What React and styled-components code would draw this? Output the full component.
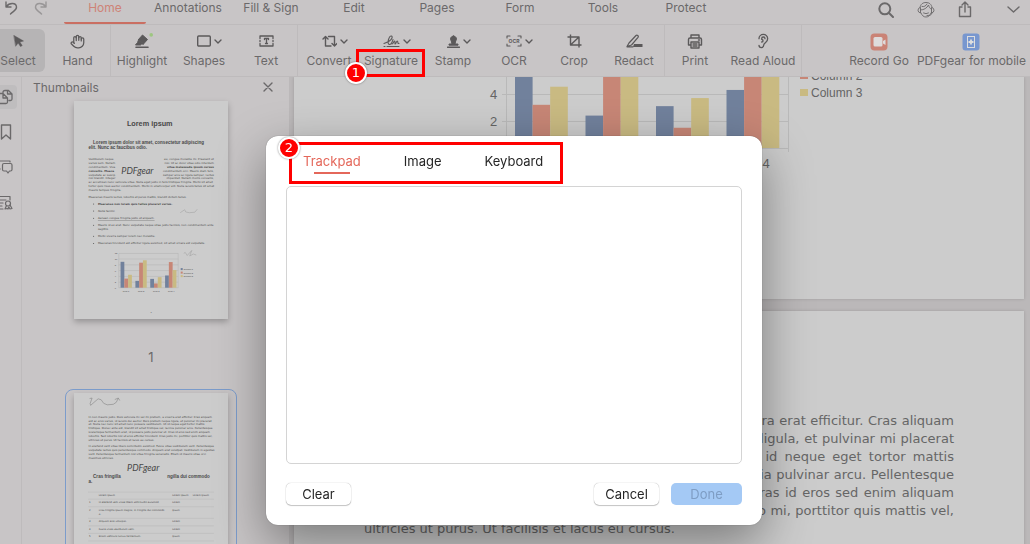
import styled, { createGlobalStyle } from "styled-components";
import { Hand, Ear } from "lucide-react";

const tabs = ["Home", "Annotations", "Fill & Sign", "Edit", "Pages", "Form", "Tools", "Protect"];

const mainText = [
    "In non mauris justo. Duis vehicula mi vel mi pretium, a viverra erat efficitur. Cras aliquam",
    "est ac eros varius, id iaculis dui auctor. Duis pretium neque ligula, et pulvinar mi placerat",
    "et. Nulla nec nunc sit amet nunc posuere vestibulum. Ut id neque eget tortor mattis",
    "tristique. Donec ante est, blandit sit amet tristique vel, lacinia pulvinar arcu. Pellentesque",
    "scelerisque fermentum erat, id posuere justo pulvinar ut. Cras id eros sed enim aliquam",
    "lobortis. Sed lobortis nisl ut eros efficitur tincidunt. Cras justo mi, porttitor quis mattis vel,",
    "ultricies ut purus. Ut facilisis et lacus eu cursus.",
];

const secondText = [
    "In eleifend velit vitae libero sollicitudin euismod. Fusce vitae vestibulum velit. Pellentesque",
    "vulputate lectus quis pellentesque commodo. Aliquam erat volutpat. Vestibulum in egestas",
    "velit. Pellentesque fermentum nisl vitae fringilla venenatis. Etiam id mauris vitae orci",
    "maximus ultricies.",
];

// the first lines wrap round the signature
const wrappedText = [
    { left: "Vestibulum neque", right: "eu, congue molestie mi. Praesent ut" },
    { left: "varius sem. Nullam", right: "nisi. Ut ac dolor vitae odio interdum" },
    { left: "condimentum. Viva", right: "vitae malesuada ipsum cursus", rightBold: true },
    { left: "convallis. Maece", right: "condimentum orci. Mauris diam felis,", leftBold: true },
    { left: "vulputate ac suscip", right: "semper arcu ac ligula semper, luctus" },
    { left: "nisl blandit. Integer", right: "imperdiet. Nullam mollis convallis," },
];

const introText = [
    "ac accumsan nunc vehicula vitae. Nulla eget justo in felis tristique fringilla. Morbi sit amet",
    "tortor quis risus auctor condimentum. Morbi in ullamcorper elit. Nulla iaculis tellus sit amet",
    "mauris tempus fringilla.",
];

const bullets = [
    { y: 413, text: "Maecenas non lorem quis tellus placerat varius.", weight: 700 },
    { y: 441, text: "Nulla facilisi.", italic: true },
    { y: 470, text: "Aenean congue fringilla justo ut aliquam.", underline: true },
    { y: 498, text: "Mauris id ex erat. Nunc vulputate neque vitae justo facilisis, non condimentum ante" },
    { y: 542, text: "Morbi viverra semper lorem nec molestie." },
    { y: 570, text: "Maecenas tincidunt est efficitur ligula euismod, sit amet ornare est vulputate." },
];

const tableRows = [
    { y: 408, no: "", text: "Lorem ipsum", a: "Lorem ipsum", b: "Lorem ipsum" },
    { y: 438, no: "1", text: "In eleifend velit vitae libero sollicitudin euismod.", a: "Lorem" },
    { y: 467, no: "2", text: "Cras fringilla ipsum magna, in fringilla dui commodo", a: "Ipsum" },
    { y: 513, no: "3", text: "Aliquam erat volutpat.", a: "Lorem" },
    { y: 543, no: "4", text: "Fusce vitae vestibulum velit.", a: "Lorem" },
    { y: 573, no: "5", text: "Etiam vehicula luctus fermentum.", a: "Ipsum" },
];

const rows = [
    [9.1, 3.2, 4.54],
    [2.4, 8.8, 9.65],
    [3.1, 1.5, 3.7],
    [4.3, 9.02, 6.2],
];
const barColors = ["#71819c", "#c78676", "#c9ba82"];

export default function App() {
    return (
        <>
            <GlobalStyle />
            <Container>
                <Header>
                    <History>
                        <IconButton aria-label="Undo"><UndoIcon /></IconButton>
                        <IconButton aria-label="Redo" $faded><RedoIcon /></IconButton>
                    </History>
                    <Tabs>
                        {tabs.map((t, i) => (
                            <Tab key={t} $active={i === 0}>{t}</Tab>
                        ))}
                    </Tabs>
                    <Actions>
                        <IconButton aria-label="Search"><SearchIcon /></IconButton>
                        <IconButton aria-label="Support"><SupportIcon /></IconButton>
                        <IconButton aria-label="Share"><ShareIcon /></IconButton>
                        <IconButton aria-label="Collapse" $apart><ChevronIcon w={13} h={7} /></IconButton>
                    </Actions>
                </Header>

                <Toolbar>
                    <Group>
                        <Tool $first $selected><Glyph><SelectIcon /></Glyph>Select</Tool>
                        <Tool $wide><Glyph><Hand size={15} strokeWidth={2} /></Glyph>Hand</Tool>
                    </Group>
                    <Group>
                        <Tool><Glyph><HighlightIcon /></Glyph>Highlight</Tool>
                        <Tool><Glyph $menu><ShapesIcon /><ChevronIcon /></Glyph>Shapes</Tool>
                        <Tool><Glyph><TextIcon /></Glyph>Text</Tool>
                    </Group>
                    <Group>
                        <Tool><Glyph $menu><ConvertIcon /><ChevronIcon /></Glyph>Convert</Tool>
                        <Tool>
                            <Glyph $menu><SignatureIcon /><ChevronIcon /></Glyph>Signature
                            <ToolMark><Badge $low>1</Badge></ToolMark>
                        </Tool>
                        <Tool><Glyph $menu><StampIcon /><ChevronIcon /></Glyph>Stamp</Tool>
                        <Tool $narrow><Glyph $menu><OcrIcon /><ChevronIcon /></Glyph>OCR</Tool>
                        <Tool $narrow><Glyph><CropIcon /></Glyph>Crop</Tool>
                        <Tool $narrow><Glyph><RedactIcon /></Glyph>Redact</Tool>
                    </Group>
                    <Group>
                        <Tool $narrow><Glyph><PrintIcon /></Glyph>Print</Tool>
                        <Tool $large><Glyph><Ear size={16} strokeWidth={2} /></Glyph>Read Aloud</Tool>
                    </Group>
                    <Promo>
                        <PromoButton><RecordIcon />Record Go</PromoButton>
                        <PromoButton><MobileIcon />PDFgear for mobile</PromoButton>
                    </Promo>
                </Toolbar>

                <Main>
                    <Rail>
                        <RailButton aria-label="Thumbnails" $active><PagesIcon /></RailButton>
                        <RailButton aria-label="Bookmarks"><BookmarkIcon /></RailButton>
                        <RailButton aria-label="Comments"><CommentsIcon /></RailButton>
                        <RailButton aria-label="Certificates"><CertificateIcon /></RailButton>
                    </Rail>
                    <Panel>
                        <PanelTitle>
                            <h2>Thumbnails</h2>
                            <IconButton aria-label="Close"><CloseIcon /></IconButton>
                        </PanelTitle>
                        <Thumb><FirstPage /></Thumb>
                        <PageNumber>1</PageNumber>
                        <Thumb $selected><SecondPage /></Thumb>
                    </Panel>
                    <Document>
                        <Page>
                            <Chart />
                        </Page>
                        <Page $text>
                            {mainText.map((line, i) => (
                                <Line key={line} $last={i === mainText.length - 1}>{line}</Line>
                            ))}
                        </Page>
                    </Document>
                </Main>
            </Container>

            <Overlay>
                <Dialog role="dialog" aria-label="Signature">
                    <DialogTabs role="tablist">
                        <DialogTab role="tab" aria-selected="true" $active>Trackpad</DialogTab>
                        <DialogTab role="tab" aria-selected="false">Image</DialogTab>
                        <DialogTab role="tab" aria-selected="false">Keyboard</DialogTab>
                        <TabsMark><Badge>2</Badge></TabsMark>
                    </DialogTabs>
                    <Pad />
                    <Buttons>
                        <Button>Clear</Button>
                        <Spacer />
                        <Button>Cancel</Button>
                        <Button $primary disabled>Done</Button>
                    </Buttons>
                </Dialog>
            </Overlay>
        </>
    );
}

function Chart() {
    return (
        <svg width="410" height="110" viewBox="454 77 410 110" fontFamily="Liberation Sans, Arial, sans-serif" fontSize="13" fill="#646464">
            <path d="M502 94.500H788M502 121.500H788M502 148.500H788M506.500 77V152M788.500 77V152" stroke="#b9b9b9" />
            {rows.map((row, r) =>
                row.map((v, c) => (
                    <rect key={`${r}${c}`} x={515 + r * 70.5 + c * 17.6} y={148 - v * 13.5} width="17.600" height={v * 13.5} fill={barColors[c]} />
                ))
            )}
            <text x="490" y="99">4</text>
            <text x="490" y="126">2</text>
            <text x="733" y="168">Row 4</text>
            <rect x="800" y="72" width="8" height="7" fill="#c78676" />
            <rect x="800" y="89" width="8" height="7" fill="#c9ba82" />
            <text x="811" y="80" fontSize="12">Column 2</text>
            <text x="811" y="97" fontSize="12">Column 3</text>
        </svg>
    );
}

function FirstPage() {
    return (
        <Mini viewBox="0 0 612 868">
            <text x="301" y="100" fontSize="29" fontWeight="700" textAnchor="middle">Lorem ipsum</text>
            <text x="76" y="169" fontSize="18" fontWeight="700">Lorem ipsum dolor sit amet, consectetur adipiscing</text>
            <text x="58" y="190" fontSize="18" fontWeight="700">elit. Nunc ac faucibus odio.</text>
            <g fontFamily="DejaVu Sans" fontSize="11">
                {wrappedText.map((t, i) => (
                    <g key={t.left}>
                        <text x="58" y={235 + i * 15.3} fontWeight={t.leftBold ? 700 : 400}>{t.left}</text>
                        <text x="556" y={235 + i * 15.3} textAnchor="end" fontWeight={t.rightBold ? 700 : 400}>{t.right}</text>
                    </g>
                ))}
                {introText.map((t, i) => <text key={t} x="58" y={327 + i * 15.3}>{t}</text>)}
                <text x="58" y="384">Maecenas mauris lectus, lobortis et purus mattis, blandit dictum tellus.</text>
                {bullets.map((b) => (
                    <g key={b.y}>
                        <circle cx="78" cy={b.y - 4} r="2" />
                        <text x="95" y={b.y} fontWeight={b.weight} fontStyle={b.italic ? "italic" : "normal"} textDecoration={b.underline ? "underline" : "none"}>{b.text}</text>
                    </g>
                ))}
                <text x="95" y="514">sagittis.</text>
            </g>
            <text x="188" y="290" fontFamily="Lato" fontStyle="italic" fontSize="36">PDFgear</text>
            <path d="M422 444l18-12 4 9 14 3 22-2 10-12M436 606l6-4 8 12 18-20-8 22 14-8 12 4" fill="none" stroke="#9c9c9c" strokeWidth="2" />
            <path d="M178 606H414V742H178zM178 628H414M178 651H414M178 674H414M178 697H414M178 720H414" stroke="#b2b2b2" strokeWidth="2" fill="none" />
            {rows.map((row, r) =>
                row.map((v, c) => (
                    <rect key={`${r}${c}`} x={185 + r * 59 + c * 15} y={742 - v * 11.3} width="15" height={v * 11.3} fill={barColors[c]} />
                ))
            )}
            <g fontSize="9">
                {["12", "10", "8", "6", "4", "2", "0"].map((n, i) => <text key={n} x="162" y={610 + i * 22.6}>{n}</text>)}
                {[1, 2, 3, 4].map((n) => <text key={n} x={134 + n * 60} y="760">Row {n}</text>)}
                {[1, 2, 3].map((n) => (
                    <g key={n}>
                        <rect x="424" y={650 + n * 14} width="8" height="8" fill={barColors[n - 1]} />
                        <text x="435" y={658 + n * 14}>Column {n}</text>
                    </g>
                ))}
                <text x="304" y="842">1</text>
            </g>
        </Mini>
    );
}

function SecondPage() {
    return (
        <Mini viewBox="0 0 612 868">
            <path d="M62 22l10-2-8 22 2 7 30-26 12 4 10 14 14 6 24-2 12-8 8-16M162 26l14-6 6 10" fill="none" stroke="#777777" strokeWidth="2" />
            <g fontFamily="DejaVu Sans" fontSize="11">
                {mainText.map((t, i) => <text key={t} x="58" y={98 + i * 15.3}>{t}</text>)}
                {secondText.map((t, i) => <text key={t} x="58" y={215 + i * 15.3}>{t}</text>)}
            </g>
            <text x="76" y="336" fontSize="18" fontWeight="700">Cras fringilla</text>
            <text x="540" y="336" fontSize="18" fontWeight="700" textAnchor="end">ngilla dui commodo</text>
            <text x="58" y="356" fontSize="18" fontWeight="700">a.</text>
            <text x="211" y="311" fontFamily="Lato" fontStyle="italic" fontSize="36">PDFgear</text>
            <g fontFamily="DejaVu Sans" fontSize="10">
                {tableRows.map((r) => (
                    <g key={r.y}>
                        <text x="60" y={r.y}>{r.no}</text>
                        <text x="98" y={r.y}>{r.text}</text>
                        <text x="390" y={r.y}>{r.a}</text>
                        <text x="472" y={r.y}>{r.b}</text>
                    </g>
                ))}
                <text x="98" y="483">a.</text>
            </g>
            <path d="M56 394H556M56 422H556M56 452H556M56 498H556M56 528H556M56 558H556M56 588H556" stroke="#b6b6b6" strokeWidth="2" />
        </Mini>
    );
}

const Svg = ({ w, h, children, sw = 1.4 }) => (
    <svg width={w} height={h} viewBox={`0 0 ${w} ${h}`} fill="none" stroke="currentColor" strokeWidth={sw} strokeLinecap="round" strokeLinejoin="round">
        {children}
    </svg>
);

const UndoIcon = () => <Svg w={14} h={14}><path d="M2 1v5h5M2.500 5.500C5 2 12 1 12.500 6c.3 3-3 4-6 7" /></Svg>;
const RedoIcon = () => <Svg w={14} h={14}><path d="M12 1v5H7M11.500 5.500C9 2 2 1 1.500 6c-.3 3 3 4 6 7" /></Svg>;
const SearchIcon = () => <Svg w={16} h={16} sw={2}><circle cx="6.800" cy="6.800" r="5.500" /><path d="M11 11l4 4" /></Svg>;
const SupportIcon = () => (
    <Svg w={18} h={18} sw={0.9}>
        <path d="M3 6.500C3.500 3 6 1.500 9 1.500s5.500 1.500 6 5M4 12c1 2.500 2.500 4 5 4s4-1.500 5-4" />
        <path d="M3 6.500Q1 7 1 9.200T3.500 12V7zM15 6.500q2 .500 2 2.700T14.500 12V7zM3.500 9C7 9 10 7 11.500 4c.5 2 1.500 3.500 3 4.500M5 5.500C7 6 9 5 10 3M15 12c0 2-2 2.500-5 2.500M6.500 12q2.500 1.500 5 0" />
    </Svg>
);
const ShareIcon = () => <Svg w={14} h={17}><path d="M4 6H1.500v9.500h11V6H10M7 11V1M4 4l3-3 3 3" /></Svg>;
const ChevronIcon = ({ w = 8, h = 5 }) => <Svg w={w} h={h}><path d={`M1 1L${w / 2} ${h - 1}L${w - 1} 1`} /></Svg>;
const CloseIcon = () => <Svg w={10} h={10}><path d="M1 1l8 8M9 1L1 9" /></Svg>;

const SelectIcon = () => <Svg w={11} h={12} sw={0.5}><path d="M1 0.500L10.500 6 6.800 7l2.400 3.600-1.700 1L5.200 8 2.800 11z" fill="currentColor" /></Svg>;
const HighlightIcon = () => (
    <Svg w={22} h={16} sw={1}>
        <path d="M7.500 6.500L11.500 2l5 4.500-4 4.500z" fill="currentColor" />
        <path d="M7.500 7l-1 2.500L4.500 12h5l1.200-1 1.500 0z" fill="currentColor" />
        <path d="M5 14.300h12" strokeWidth="1.600" />
        <circle cx="20.200" cy="1.900" r="1.800" fill="#9dc680" stroke="none" />
    </Svg>
);
const ShapesIcon = () => <Svg w={14} h={12}><rect x="0.700" y="1" width="12.600" height="10" rx="1" /></Svg>;
const TextIcon = () => (
    <Svg w={15} h={12} sw={1.3}>
        <path d="M1 3.500V1h13v2.500M1 8.500V11h13V8.500M1 5.500v1M14 5.500v1" />
        <path d="M5.500 4.500v-1h4v1M7.500 3.500v5M6.500 8.500h2" />
    </Svg>
);
const ConvertIcon = () => <Svg w={15} h={13}><path d="M1 4l2.500-2.500L6 4M3.500 2v9H9M6.500 1.500h6v9M10 8.500l2.500 2.500L15 8.500" /></Svg>;
const SignatureIcon = () => (
    <Svg w={17} h={13} sw={1.1}>
        <path d="M1 8.500c3-1 7-3 8-5.500C9.800 1 7.500 0 6.300 2.500 5 5 4.500 9.500 6.500 9.500S9.500 6 10 4.500M9 9c1.500 0 1.500-3 2.500-3s0 3 .8 3 1-3 2-3-.2 2.800 1.700 2.500" />
        <path d="M1 11.500h1M4 11.500h12" />
    </Svg>
);
const StampIcon = () => (
    <Svg w={13} h={13} sw={1}>
        <path d="M6.500 1a3 3 0 0 0-2.200 5L5 9H2v1.200h9V9H8l.7-3A3 3 0 0 0 6.500 1z" fill="currentColor" />
        <path d="M.5 12.300h12" strokeWidth="1.400" />
    </Svg>
);
const OcrIcon = () => (
    <Svg w={16} h={12} sw={1.1}>
        <path d="M1 3V1h3M12 1h3v2M1 9v2h3M12 11h3V9" />
        <text x="8" y="8" textAnchor="middle" fontSize="5" fontWeight="700" fontFamily="Inter" fill="currentColor" stroke="none">OCR</text>
    </Svg>
);
const CropIcon = () => <Svg w={15} h={14}><path d="M3.500 0.500V11h11M.5 3h11.500v10.500M4 10.500l7.500-7" strokeLinecap="butt" /></Svg>;
const RedactIcon = () => (
    <Svg w={17} h={14} sw={1.2}>
        <path d="M3 9l7-7.500c1-1 3 .500 2 1.800L5.500 11 1 12.500zM1 12.800h6" />
        <path d="M8 10h8.500v3H7z" fill="currentColor" stroke="none" />
    </Svg>
);
const PrintIcon = () => (
    <Svg w={16} h={15}>
        <path d="M4 4V1h8v3M4 11H1.500V5.500Q1.500 4 3 4h10q1.500 0 1.500 1.500V11H12M4 8h8v6H4zM6 10h4M6 12h4M11.500 6h1" />
    </Svg>
);
const RecordIcon = () => (
    <svg width="18" height="18" viewBox="0 0 18 18">
        <rect x="0.500" y="0.500" width="17" height="17" rx="4" fill="#ca8376" />
        <rect x="3.500" y="4" width="9" height="9.500" rx="1.500" fill="#dedbdb" />
        <path d="M13 8l2.500-1.500v5.500L13 10.500z" fill="#dedbdb" />
    </svg>
);
const MobileIcon = () => (
    <svg width="18" height="18" viewBox="0 0 18 18" fill="none" stroke="#dedede">
        <rect x="0.500" y="0.500" width="17" height="17" rx="3" fill="#7897cf" stroke="none" />
        <rect x="5.500" y="3.500" width="7" height="11" />
        <path d="M9 6.500v5M6.500 9h5" strokeWidth="1.800" />
    </svg>
);
const PagesIcon = () => <Svg w={15} h={16} sw={1.3}><path d="M5 3.500Q5 1.500 7 1.500h3.500L14 5v5q0 1.500-1.500 1.500H11M9.500 1.500V5H14M1 4.500h4L9.500 9v4q0 1.500-1.500 1.500H1M5 4.500V9h4.500" /></Svg>;
const BookmarkIcon = () => <Svg w={15} h={16}><path d="M3.500 1h9v14L8 11l-4.500 4z" /></Svg>;
const CommentsIcon = () => (
    <Svg w={15} h={14} sw={1.2}>
        <path d="M12 2V1H1M2 9L1 10M6 3.500h6.500q1.500 0 1.500 1.500v4.500q0 1.500-1.500 1.500h-1l-1.500 2-1.500-2H6Q4.500 11 4.500 9.500V5Q4.500 3.500 6 3.500z" />
    </Svg>
);
const CertificateIcon = () => (
    <Svg w={15} h={15} sw={1.2}>
        <path d="M1 1.500h11V5M1 5h7M1 8h4M1 11h3M1 14h4" />
        <circle cx="10" cy="8.500" r="2.500" />
        <path d="M8.500 10.500L7 14l2-.5 1 .500.800-2 1.200 2 2-.5-2-3.500" />
    </Svg>
);

const GlobalStyle = createGlobalStyle`
    * {
        box-sizing: border-box;
    }
    body {
        margin: 0;
        overflow: hidden;
        background: #c8c5c6;
        color: #6b696a;
        font-family: Inter, "Noto Sans", sans-serif;
        font-size: 12px;
    }
    button {
        margin: 0;
        padding: 0;
        border: none;
        background: none;
        color: inherit;
        font: inherit;
    }
    svg {
        display: block;
        flex-shrink: 0;
    }
`;

const Container = styled.div`
    height: 100vh;
    display: flex;
    flex-direction: column;
`;

const Header = styled.header`
    height: 25px;
    display: flex;
    border-bottom: 1px solid #bebbbc;
`;

const History = styled.div`
    width: 64px;
    display: flex;
    gap: 16px;
    padding: 1px 0 0 4px;
    align-items: flex-start;
`;

const IconButton = styled.button`
    display: flex;
    margin-left: ${(p) => (p.$apart ? "12px" : "0")};
    opacity: ${(p) => (p.$faded ? 0.5 : 1)};
`;

const Tabs = styled.nav`
    display: flex;
    gap: 1px;
`;

const Tab = styled.button`
    width: 82px;
    display: flex;
    justify-content: center;
    line-height: 16px;
    white-space: nowrap;
    border-bottom: 2px solid ${(p) => (p.$active ? "#ca6f62" : "transparent")};
    border-radius: 2px;
    color: ${(p) => (p.$active ? "#ce8377" : "inherit")};
`;

const Actions = styled.div`
    margin-left: auto;
    display: flex;
    align-items: center;
    gap: 23px;
    padding: 0 10px 5px 0;
`;

const Toolbar = styled.div`
    height: 52px;
    display: flex;
    border-bottom: 1px solid #bebbbc;
`;

const Group = styled.div`
    display: flex;
    align-items: center;
    border-right: 1px solid #bebbbc;
`;

const Tool = styled.button`
    position: relative;
    width: ${(p) => (p.$first ? "45px" : p.$wide ? "65px" : p.$large ? "76px" : p.$narrow ? "60px" : "62px")};
    height: 43px;
    padding: ${(p) => (p.$first ? "1px 9px 0 0" : "1px 0 0")};
    display: flex;
    flex-direction: column;
    align-items: center;
    justify-content: center;
    gap: 4px;
    line-height: 16px;
    white-space: nowrap;
    border-radius: 0 6px 6px 0;
    background: ${(p) => (p.$selected ? "#b6b4b5" : "none")};
`;

const Glyph = styled.span`
    height: 16px;
    display: flex;
    align-items: center;
    gap: 3px;
    padding-left: ${(p) => (p.$menu ? "11px" : "0")};
    color: #5b595a;
`;

const Promo = styled.div`
    margin-left: auto;
    display: flex;
    align-items: center;
    gap: 8px;
    padding-right: 4px;
`;

const PromoButton = styled.button`
    display: flex;
    flex-direction: column;
    align-items: center;
    gap: 2px;
    line-height: 16px;
    white-space: nowrap;
`;

const Main = styled.main`
    flex: 1;
    min-height: 0;
    display: flex;
`;

const Rail = styled.aside`
    width: 22px;
    display: flex;
    flex-direction: column;
    gap: 11px;
    padding-top: 8px;
    border-right: 1px solid #bebbbc;
`;

const RailButton = styled.button`
    width: 17px;
    height: 24px;
    display: flex;
    align-items: center;
    justify-content: flex-end;
    padding-right: 4px;
    border-radius: 0 4px 4px 0;
    background: ${(p) => (p.$active ? "#bfbdbe" : "none")};
`;

const Panel = styled.section`
    width: 267px;
    padding: 0 43px;
    overflow: hidden;
`;

const PanelTitle = styled.div`
    display: flex;
    justify-content: space-between;
    align-items: center;
    height: 20px;
    margin: 0 -27px 0 -32px;
    h2 {
        margin: 0;
        font-size: 12px;
        font-weight: 400;
    }
`;

const Thumb = styled.div`
    width: 172px;
    padding: 3px 8px 8px;
    border: 1px solid ${(p) => (p.$selected ? "#7c9ccb" : "transparent")};
    border-radius: 8px;
`;

const Mini = styled.svg`
    width: 100%;
    background: #cccccc;
    fill: #484848;
    font-family: "Liberation Sans", Arial, sans-serif;
    box-shadow: 0 3px 6px rgba(0, 0, 0, 0.25);
`;

const PageNumber = styled.p`
    width: 172px;
    margin: 17px 0 20px;
    line-height: 24px;
    font-size: 13px;
    text-align: center;
`;

const Document = styled.section`
    flex: 1;
    min-width: 0;
    display: flex;
    flex-direction: column;
    gap: 12px;
    padding: 0 6px 0 5px;
    background: #bbb8b9;
    overflow: hidden;
`;

const Page = styled.article`
    flex-shrink: 0;
    padding: ${(p) => (p.$text ? "101px 70px" : "0 0 112px")};
    background: #cccccc;
    box-shadow: 0 0 3px rgba(0, 0, 0, 0.15);
    svg {
        margin: 0 auto;
    }
`;

const Line = styled.p`
    margin: 0;
    font-family: "DejaVu Sans", sans-serif;
    font-size: 13px;
    line-height: 18px;
    color: #666666;
    white-space: nowrap;
    text-align: justify;
    text-align-last: ${(p) => (p.$last ? "left" : "justify")};
`;

const Overlay = styled.div`
    position: fixed;
    inset: 0;
    display: flex;
    justify-content: center;
    align-items: flex-start;
    padding: 136px 2px 0 0;
`;

const Dialog = styled.div`
    width: 496px;
    padding: 6px 20px 20px;
    border-radius: 12px;
    background: #ffffff;
    color: #262626;
    font-size: 13px;
    box-shadow: 0 0 1px rgba(0, 0, 0, 0.5), 0 18px 50px rgba(0, 0, 0, 0.4);
`;

const DialogTabs = styled.div`
    position: relative;
    height: 44px;
    display: flex;
    align-items: flex-start;
    gap: 43px;
    padding: 10px 17px;
`;

const DialogTab = styled.button`
    line-height: 18px;
    color: ${(p) => (p.$active ? "#e4675a" : "inherit")};
    &::after {
        content: "";
        display: block;
        width: 36px;
        height: 2px;
        margin: 2px auto 0;
        background: ${(p) => (p.$active ? "#e4675a" : "none")};
    }
`;

const Pad = styled.div`
    height: 278px;
    border: 1px solid #d4d4d4;
    border-radius: 5px;
`;

const Buttons = styled.div`
    display: flex;
    gap: 12px;
    padding-top: 19px;
`;

const Spacer = styled.div`
    flex: 1;
`;

const Button = styled.button`
    width: ${(p) => (p.$primary ? "71px" : "65px")};
    height: 22px;
    border-radius: 5px;
    background: ${(p) => (p.$primary ? "#a4c9f5" : "#ffffff")};
    color: ${(p) => (p.$primary ? "#7e9dc4" : "inherit")};
    box-shadow: ${(p) => (p.$primary ? "none" : "0 0 1px rgba(0, 0, 0, 0.4), 0 1px 1px rgba(0, 0, 0, 0.2)")};
`;

const Mark = styled.span`
    position: absolute;
    border: 3px solid #ff0000;
    pointer-events: none;
`;

const ToolMark = styled(Mark)`
    top: 20px;
    left: -4px;
    width: 69px;
    height: 28px;
`;

const TabsMark = styled(Mark)`
    top: 0;
    left: 3px;
    width: 274px;
    height: 42px;
`;

const Badge = styled.span`
    position: absolute;
    top: ${(p) => (p.$low ? "10px" : "-8px")};
    left: -14px;
    width: 22px;
    height: 22px;
    border: 2px solid #ffffff;
    border-radius: 50%;
    background: #ff0000;
    color: #ffffff;
    box-shadow: 0 0 2px rgba(0, 0, 0, 0.5);
    font-family: "DejaVu Sans", sans-serif;
    font-size: 13px;
    line-height: 18px;
    text-align: center;
`;
